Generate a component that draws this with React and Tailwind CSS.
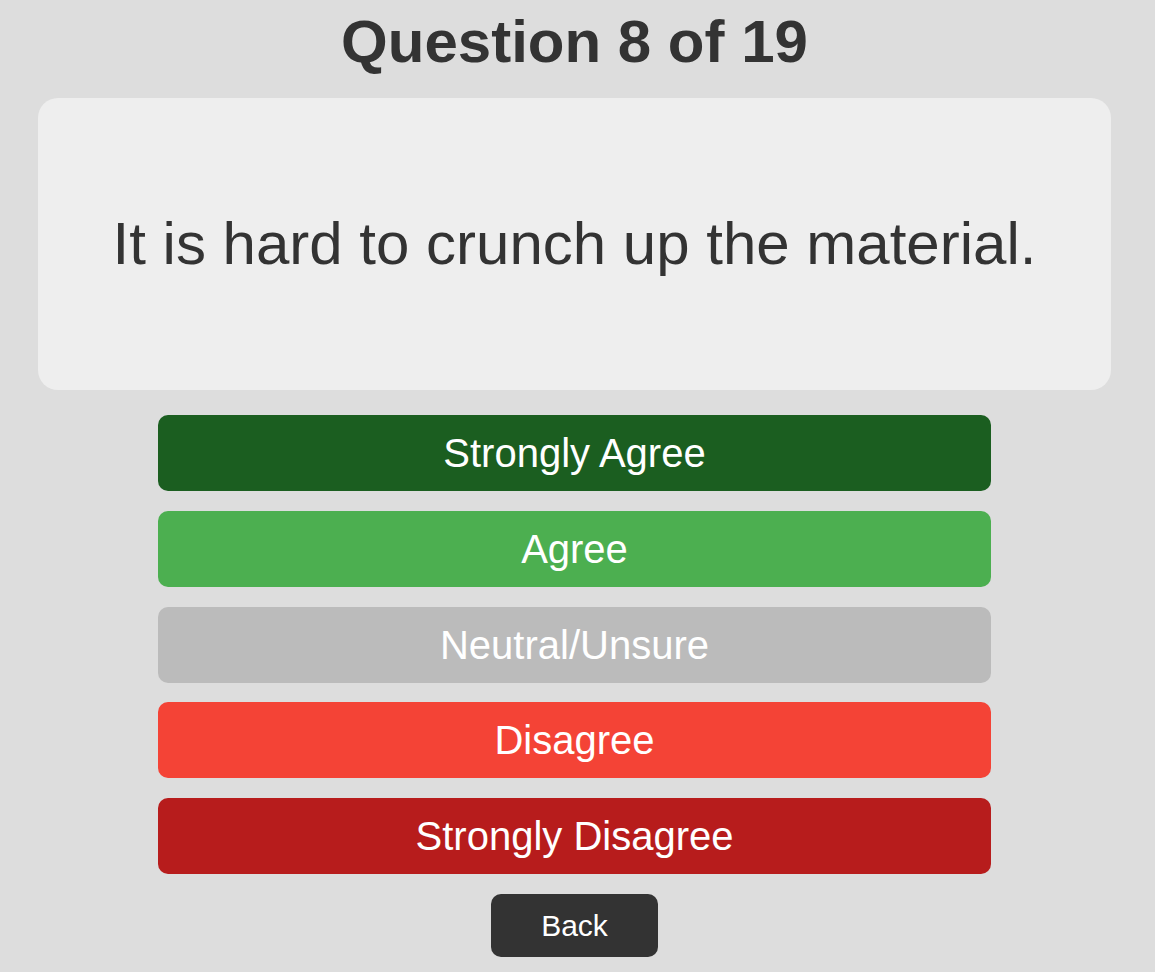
import React from "react";

const answers = [
  { label: "Strongly Agree", color: "bg-[#1b5e20]" },
  { label: "Agree", color: "bg-[#4caf50]" },
  { label: "Neutral/Unsure", color: "bg-[#bbbbbb]" },
  { label: "Disagree", color: "bg-[#f44336]" },
  { label: "Strongly Disagree", color: "bg-[#b71c1c]" },
];

export default function App() {
  return (
    <div
      className="min-h-screen bg-[#dddddd] pl-[38px] pr-[44px] pt-[12px] text-[#333333]"
      style={{ fontFamily: '"Liberation Sans", Arial, sans-serif' }}
    >
      <h1 className="text-center text-[60px] font-bold leading-none">Question 8 of 19</h1>

      <div className="mt-[26px] flex h-[292px] items-center justify-center rounded-[20px] bg-[#eeeeee]">
        <p className="text-center text-[60px] leading-none">It is hard to crunch up the material.</p>
      </div>

      <div className="mx-auto mt-[25px] flex w-[833px] flex-col gap-[19.75px]">
        {answers.map((a) => (
          <button
            key={a.label}
            className={`flex h-[76px] w-full items-center justify-center rounded-[10px] text-[40px] leading-none text-white ${a.color}`}
          >
            {a.label}
          </button>
        ))}
      </div>

      <div className="mt-[20px] flex justify-center">
        <button className="flex h-[63px] w-[167px] items-center justify-center rounded-[10px] bg-[#333333] text-[30px] leading-none text-white">
          Back
        </button>
      </div>
    </div>
  );
}
